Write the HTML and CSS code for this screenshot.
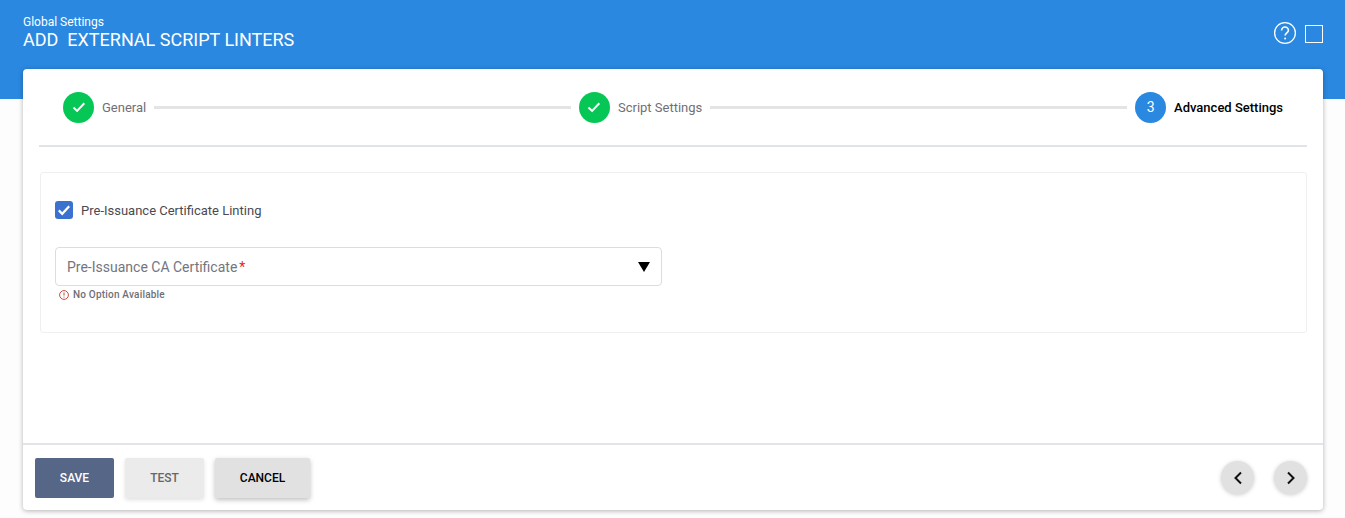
FILE: index.html
```html
<!DOCTYPE html>
<html>
<head>
  <title>Add External Script Linters</title>
  <meta charset="utf-8">
  <link rel="stylesheet" href="styles.css">
</head>
<body>
  <div class="header">
    <div class="header-titles">
      <div class="crumb">Global Settings</div>
      <h1>ADD&nbsp; EXTERNAL SCRIPT LINTERS</h1>
    </div>
    <div class="header-icons">
      <svg class="help-icon" width="24" height="24" viewBox="0 0 24 24" fill="none" stroke="#fff">
        <circle cx="12" cy="12" r="10.4" stroke-width="1.3"/>
        <path d="M8.6 9.4a3.4 3.4 0 0 1 6.8 0c0 2.3-3.3 2.7-3.3 5.2" stroke-width="1.6"/>
        <circle cx="12.1" cy="17.6" r="1" fill="#fff" stroke="none"/>
      </svg>
      <div class="window-icon"></div>
    </div>
  </div>

  <div class="card">
    <div class="stepper">
      <div class="step">
        <span class="step-dot done">
          <svg width="14" height="14" viewBox="0 0 14 14" fill="none" stroke="#fff" stroke-width="2"><path d="M1.5 7.5l3.6 3.4 7.2-7.6"/></svg>
        </span>
        <span class="step-label">General</span>
      </div>
      <div class="step-line"></div>
      <div class="step">
        <span class="step-dot done">
          <svg width="14" height="14" viewBox="0 0 14 14" fill="none" stroke="#fff" stroke-width="2"><path d="M1.5 7.5l3.6 3.4 7.2-7.6"/></svg>
        </span>
        <span class="step-label">Script Settings</span>
      </div>
      <div class="step-line"></div>
      <div class="step">
        <span class="step-dot active">3</span>
        <span class="step-label current">Advanced Settings</span>
      </div>
    </div>

    <div class="content">
      <div class="panel">
        <label class="check-row">
          <span class="checkbox">
            <svg width="14" height="14" viewBox="0 0 14 14" fill="none" stroke="#fff" stroke-width="2.2"><path d="M1.8 7.4l3.4 3.4 7-7.6"/></svg>
          </span>
          <span>Pre-Issuance Certificate Linting</span>
        </label>

        <div class="select">
          <span class="select-label">Pre-Issuance CA Certificate<span class="required">*</span></span>
          <span class="select-arrow"></span>
        </div>
        <div class="hint">
          <svg width="10" height="10" viewBox="0 0 10 10" fill="none" stroke="#c0392b" stroke-width="0.9">
            <circle cx="5" cy="5" r="4.4"/>
            <path d="M5 2.4v3.2M5 6.6v1"/>
          </svg>
          <span>No Option Available</span>
        </div>
      </div>
    </div>

    <div class="footer">
      <div class="buttons">
        <button class="btn btn-save">SAVE</button>
        <button class="btn btn-test">TEST</button>
        <button class="btn btn-cancel">CANCEL</button>
      </div>
      <div class="nav-buttons">
        <button class="nav-btn">
          <svg width="10" height="14" viewBox="0 0 10 14" fill="none" stroke="#111" stroke-width="2"><path d="M8 1.5L2.5 7 8 12.5"/></svg>
        </button>
        <button class="nav-btn">
          <svg width="10" height="14" viewBox="0 0 10 14" fill="none" stroke="#111" stroke-width="2"><path d="M2 1.5L7.5 7 2 12.5"/></svg>
        </button>
      </div>
    </div>
  </div>
</body>
</html>
```

FILE: styles.css
```css
html, body {
  height: 100%;
}

body {
  font-family: Roboto, "Liberation Sans", sans-serif;
  margin: 0;
  background-color: #fdfdfd;
  overflow: hidden;
}

.header {
  display: flex;
  justify-content: space-between;
  height: 99px;
  padding: 15px 22px 0 23px;
  box-sizing: border-box;
  background-color: #2a88e0;
  color: white;
}

.crumb {
  font-size: 12px;
  line-height: 14px;
}

h1 {
  font-size: 18px;
  font-weight: 400;
  line-height: 22px;
  margin: 0;
}

.header-icons {
  display: flex;
  align-items: flex-start;
  gap: 8px;
  padding-top: 6px;
}

.window-icon {
  width: 16px;
  height: 16px;
  margin-top: 4px;
  border: 1px solid #fff;
  border-width: 1.5px;
}

.card {
  display: flex;
  flex-direction: column;
  height: 441px;
  margin: -30px 22px 0 23px;
  background-color: white;
  border-radius: 4px;
  box-shadow: 0 1px 5px rgba(0, 0, 0, 0.3);
  position: relative;
}

.stepper {
  display: flex;
  align-items: center;
  height: 78px;
  margin: 0 16px;
  padding: 0 24px;
  box-sizing: border-box;
  border-bottom: 2px solid #e0e3e7;
}

.step {
  display: flex;
  align-items: center;
  gap: 8px;
}

.step-dot {
  display: flex;
  align-items: center;
  justify-content: center;
  width: 31px;
  height: 31px;
  border-radius: 50%;
  color: white;
  font-size: 14px;
}

.step-dot.done {
  background-color: #06c755;
}

.step-dot.active {
  background-color: #2a88e0;
}

.step-label {
  font-size: 13px;
  color: #6f6f76;
}

.step-label.current {
  color: #000;
  font-weight: 500;
}

.step-line {
  flex: 1;
  height: 3px;
  margin: 0 8px;
  background-color: #e4e4e4;
}

.content {
  flex: 1;
  padding: 25px 16px 0 17px;
}

.panel {
  height: 161px;
  padding: 0 14px;
  box-sizing: border-box;
  border: 1px solid #eeeff1;
  border-radius: 3px;
}

.check-row {
  display: flex;
  align-items: center;
  gap: 8px;
  margin-top: 28px;
  font-size: 13px;
  color: #4a4a50;
}

.checkbox {
  display: flex;
  align-items: center;
  justify-content: center;
  width: 18px;
  height: 18px;
  border-radius: 3px;
  background-color: #3b72d0;
}

.select {
  display: flex;
  align-items: center;
  justify-content: space-between;
  width: 607px;
  height: 39px;
  margin-top: 28px;
  padding: 0 11px;
  box-sizing: border-box;
  border: 1px solid #dcdde0;
  border-radius: 4px;
}

.select-label {
  font-size: 14px;
  color: #74757e;
}

.required {
  margin-left: 2px;
  color: #f01c1c;
}

.select-arrow {
  width: 0;
  height: 0;
  border-left: 6px solid transparent;
  border-right: 6px solid transparent;
  border-top: 10px solid #000;
}

.hint {
  display: flex;
  align-items: center;
  gap: 4px;
  margin: 3px 0 0 4px;
  font-size: 10px;
  font-weight: 500;
  letter-spacing: 0.2px;
  color: #6f6f76;
}

.footer {
  display: flex;
  align-items: center;
  justify-content: space-between;
  height: 65px;
  padding: 0 16px 0 12px;
  border-top: 2px solid #e3e4ea;
}

.buttons {
  display: flex;
  gap: 11px;
}

.btn {
  width: 79px;
  height: 40px;
  border: none;
  border-radius: 2px;
  font-family: inherit;
  font-size: 12px;
  font-weight: 500;
}

.btn-save {
  background-color: #566686;
  color: white;
}

.btn-test {
  background-color: #ebebeb;
  color: #666;
  box-shadow: 0 2px 4px rgba(0, 0, 0, 0.12);
}

.btn-cancel {
  width: 95px;
  background-color: #e1e1e1;
  color: #000;
  box-shadow: 0 2px 5px rgba(0, 0, 0, 0.25);
}

.nav-buttons {
  display: flex;
  gap: 20px;
}

.nav-btn {
  display: flex;
  align-items: center;
  justify-content: center;
  width: 33px;
  height: 33px;
  padding: 0;
  border: none;
  border-radius: 50%;
  background-color: #e1e1e1;
  box-shadow: 0 1px 4px rgba(0, 0, 0, 0.2);
}
```
